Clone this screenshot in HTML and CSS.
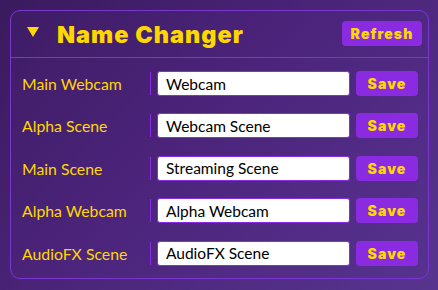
FILE: index.html
```html
<!DOCTYPE html>
<html>
<head>
<meta charset="utf-8">
<link rel="stylesheet" href="styles.css">
</head>
<body>
<div class="panel">
  <div class="header">
    <span class="caret"></span>
    <h1 class="title">Name Changer</h1>
    <button class="btn refresh">Refresh</button>
  </div>
  <div class="rows">
    <div class="row">
      <label class="label">Main Webcam</label>
      <input class="field" type="text" value="Webcam">
      <button class="btn save">Save</button>
    </div>
    <div class="row">
      <label class="label">Alpha Scene</label>
      <input class="field" type="text" value="Webcam Scene">
      <button class="btn save">Save</button>
    </div>
    <div class="row">
      <label class="label">Main Scene</label>
      <input class="field" type="text" value="Streaming Scene">
      <button class="btn save">Save</button>
    </div>
    <div class="row">
      <label class="label">Alpha Webcam</label>
      <input class="field" type="text" value="Alpha Webcam">
      <button class="btn save">Save</button>
    </div>
    <div class="row">
      <label class="label">AudioFX Scene</label>
      <input class="field" type="text" value="AudioFX Scene">
      <button class="btn save">Save</button>
    </div>
  </div>
</div>
</body>
</html>
```
FILE: styles.css
```css
html, body {
  margin: 0;
  padding: 0;
  width: 438px;
  height: 290px;
  overflow: hidden;
}
body {
  background: linear-gradient(135deg, #3a1a5e 0%, #4a2478 45%, #57358f 100%);
  font-family: Lato, "Liberation Sans", sans-serif;
  padding: 10px 9px 0 10px;
  box-sizing: border-box;
}
.panel {
  box-sizing: border-box;
  height: 269px;
  border: 1px solid #7b36d2;
  border-radius: 10px;
  background: rgba(90, 40, 150, 0.12);
}
.header {
  display: flex;
  align-items: center;
  height: 46px;
  border-bottom: 1px solid #7b36d2;
  padding: 0 6px 0 16px;
}
.caret {
  width: 0;
  height: 0;
  border-left: 6px solid transparent;
  border-right: 6px solid transparent;
  border-top: 10px solid #ffd700;
  margin: 0 18px 0 0;
  position: relative;
  top: -2px;
}
.title {
  margin: 0;
  flex: 1;
  color: #ffd700;
  font-family: Inter, "DejaVu Sans", sans-serif;
  font-weight: 900;
  font-size: 23.5px;
  letter-spacing: 1px;
}
.btn {
  border: none;
  background: #8a2be2;
  color: #ffd700;
  font-family: Inter, "DejaVu Sans", sans-serif;
  font-weight: 900;
  font-size: 14px;
  border-radius: 4px;
  height: 25px;
  padding: 0;
  letter-spacing: 1.1px;
}
.refresh {
  width: 80px;
  margin-top: -1px;
}
.rows {
  display: flex;
  flex-direction: column;
  gap: 17.4px;
  padding: 13px 10px 0 11px;
}
.row {
  display: flex;
  align-items: center;
  height: 25px;
}
.label {
  width: 128px;
  height: 23px;
  line-height: 23px;
  border-right: 1px solid #8a2be2;
  margin-right: 6px;
  color: #ffd700;
  font-size: 15.8px;
  white-space: nowrap;
}
.field {
  box-sizing: border-box;
  width: 193px;
  height: 25px;
  margin: 0 6px 0 0;
  border: 1px solid #8a2be2;
  border-radius: 3px;
  background: #fff;
  color: #000;
  font-family: Lato, sans-serif;
  font-size: 15.5px;
  padding: 0 8px;
}
.save {
  width: 62px;
}
```
